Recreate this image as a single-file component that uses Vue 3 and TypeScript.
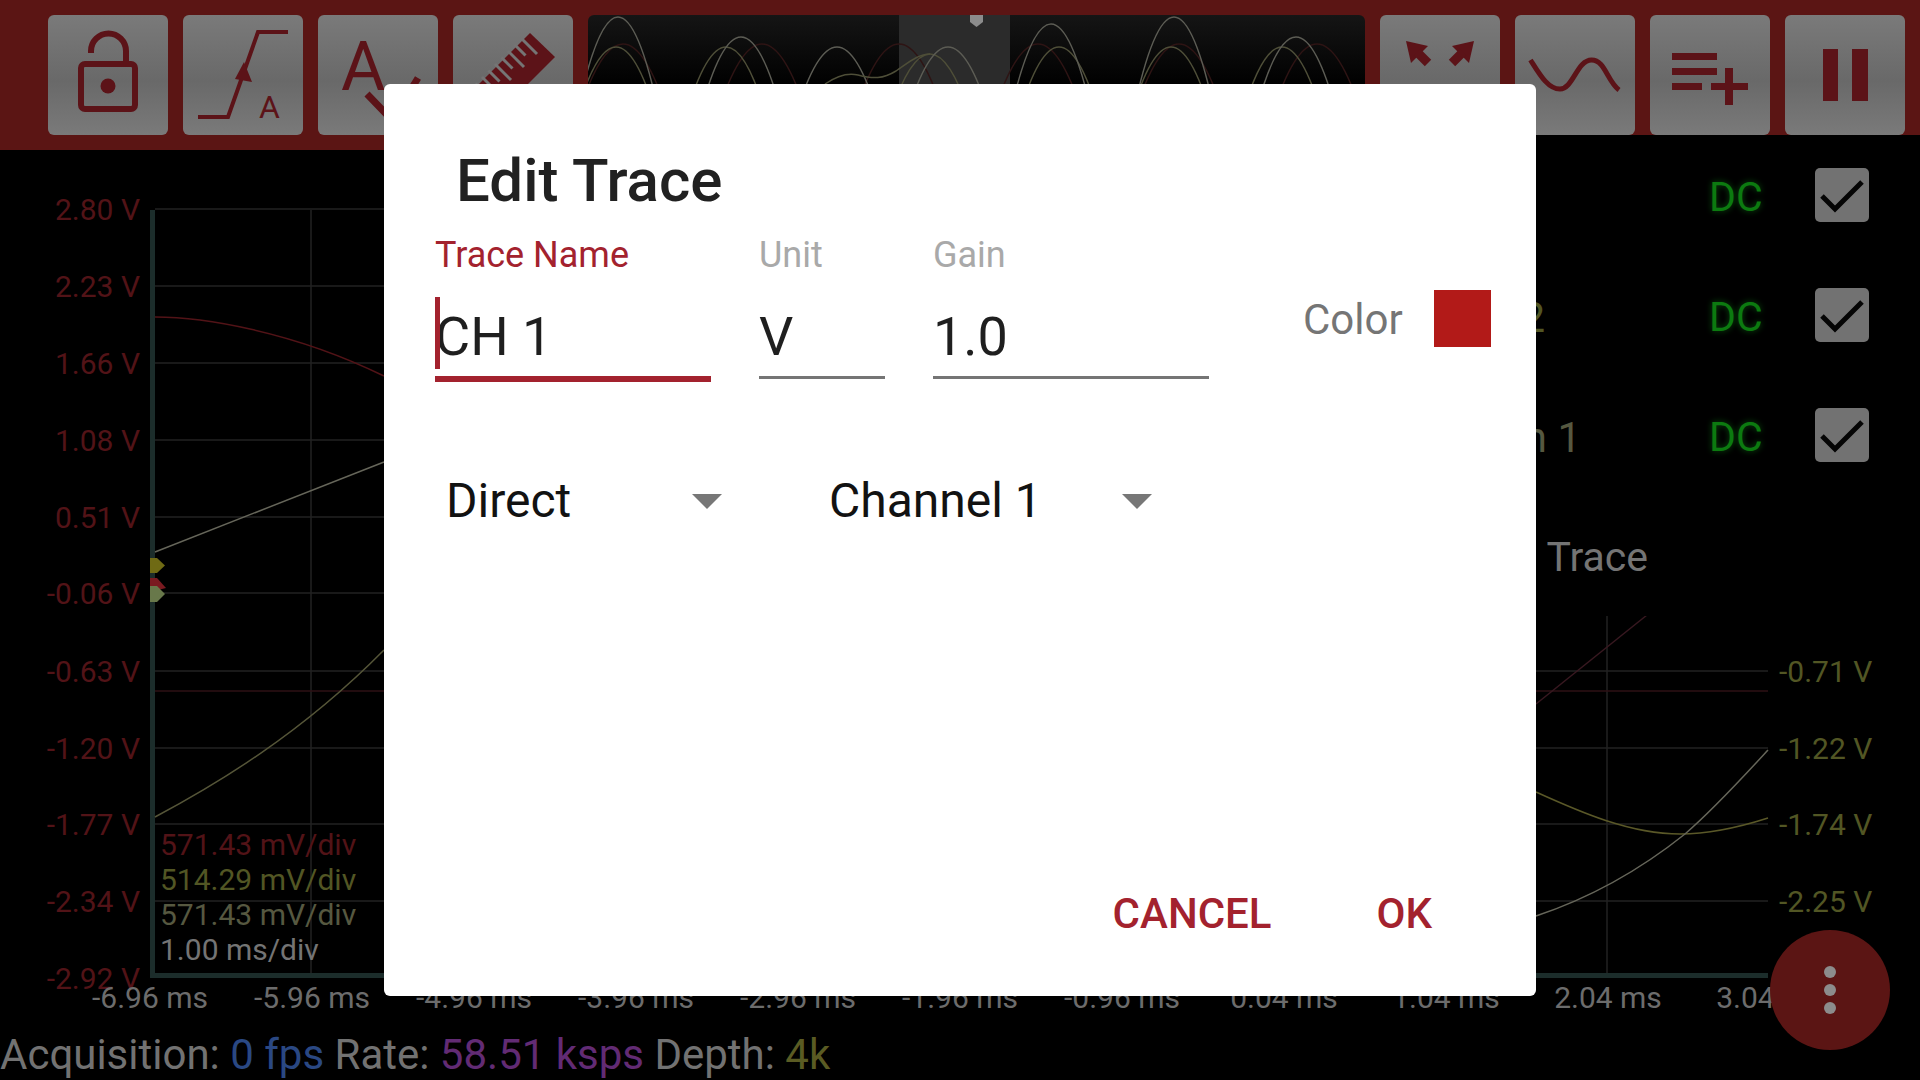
<template>
  <div class="screen">
    <header class="toolbar">
      <div class="tools tools-left">
        <button class="tool">
          <svg viewBox="0 0 120 120" class="ico">
            <rect x="33" y="49" width="54" height="45" rx="4" class="ln" stroke-width="6" />
            <circle cx="60" cy="71" r="7.5" class="fl" />
            <path d="M43 38V36a17.5 17.5 0 0 1 35 0V46" class="ln" stroke-width="6" />
          </svg>
        </button>
        <button class="tool">
          <svg viewBox="0 0 120 120" class="ico">
            <path d="M15 102H45L75 17H105" class="ln" stroke-width="4" />
            <path d="M61 47L52 64L69 67Z" class="fl" />
            <text x="76" y="103" class="ico-text" font-size="32">A</text>
          </svg>
        </button>
        <button class="tool">
          <svg viewBox="0 0 120 120" class="ico">
            <text x="23" y="75" class="ico-text" font-size="68">A</text>
            <path d="M49 79L74 105L100 63" class="ln" stroke-width="7" />
          </svg>
        </button>
        <button class="tool">
          <svg viewBox="0 0 120 120" class="ico">
            <path d="M77 18L102 42L37 107L12 83Z" class="fl" />
            <line
              v-for="t in rulerTicks"
              :key="t.x1"
              :x1="t.x1"
              :y1="t.y1"
              :x2="t.x2"
              :y2="t.y2"
              class="tick"
            />
          </svg>
        </button>
        <div class="overview">
          <svg viewBox="0 0 777 120" class="overview-svg">
            <rect x="311" y="0" width="111" height="120" fill="#2b2b2b" />
            <path v-for="b in bumpsRed" :key="b" :d="b" class="bump" stroke="#2e1414" />
            <path v-for="b in bumpsOlive" :key="b" :d="b" class="bump" stroke="#4e4e38" />
            <path v-for="b in bumpsGray" :key="b" :d="b" class="bump" stroke="#5c5c54" />
            <path d="M237 69C250 60 262 58 270 60C285 64 295 64 308 56C320 48 330 39 342 39" class="bump" stroke="#4e4e38" />
            <path d="M382 0H395V7L388.500 12L382 7Z" fill="#8c8c8c" />
          </svg>
        </div>
      </div>
      <div class="tools tools-right">
        <button class="tool">
          <svg viewBox="0 0 120 120" class="ico">
            <path d="M26 26L48 31L31 48Z" class="fl" />
            <path d="M37 37L48 48" class="ln" stroke-width="9" />
            <path d="M94 26L72 31L89 48Z" class="fl" />
            <path d="M83 37L72 48" class="ln" stroke-width="9" />
          </svg>
        </button>
        <button class="tool">
          <svg viewBox="0 0 120 120" class="ico">
            <path d="M15.500 45C25 60 33 74 45 74C58 74 62 45 76.600 45C90 45 92 66 104 75" class="ln" stroke-width="5" />
          </svg>
        </button>
        <button class="tool">
          <svg viewBox="0 0 120 120" class="ico">
            <path d="M22 38H67V45H22ZM22 53H67V60H22ZM22 68H52V75H22ZM61 68H75V53H83V68H98V75H83V90H75V75H61Z" class="fl" />
          </svg>
        </button>
        <button class="tool">
          <svg viewBox="0 0 120 120" class="ico">
            <path d="M38 34H53V86H38ZM67 34H83V86H67Z" class="fl" />
          </svg>
        </button>
      </div>
    </header>

    <main class="workspace">
      <svg class="chart" viewBox="0 150 1920 880" width="1920" height="880">
        <line v-for="y in gridY" :key="y" x1="155" x2="1768" :y1="y" :y2="y" class="grid" />
        <line v-for="x in gridX" :key="x" :x1="x" :x2="x" y1="210" y2="975" class="grid" />
        <line x1="155" x2="1768" y1="691" y2="691" stroke="#2e1014" stroke-width="1.500" />
        <path d="M152.500 210V975.500H1768" fill="none" stroke="#1c2d2b" stroke-width="5" />

        <path d="M155 317C200 317 290 330 384 376" class="trace" stroke="#521317" />
        <path d="M155 552L384 462" class="trace" stroke="#66665a" />
        <path d="M155 817C215 785 300 735 384 650" class="trace" stroke="#555538" />
        <path d="M1536 704L1647 615" class="trace" stroke="#381820" />
        <path d="M1536 792C1580 812 1630 834 1680 834C1710 834 1740 827 1768 818" class="trace" stroke="#5a5828" />
        <path d="M1536 916C1590 898 1640 870 1685 834C1715 808 1745 775 1768 750" class="trace" stroke="#66665a" />

        <path d="M150 558H157L165 565.500L157 573H150Z" fill="#6f6a14" />
        <path d="M150 578H157L166 588L150 592Z" fill="#7a1a20" />
        <path d="M150 586H157L165 594L157 602H150Z" fill="#68784a" />

        <text v-for="l in leftLabels" :key="l.text" x="140" :y="l.y + 10.500" text-anchor="end" class="lbl" fill="#521317">{{ l.text }}</text>
        <text v-for="l in rightLabels" :key="l.text" x="1779" :y="l.y + 10.500" class="lbl" fill="#525624">{{ l.text }}</text>
        <text v-for="t in timeLabels" :key="t.text" :x="t.x" y="1008" text-anchor="middle" class="lbl" fill="#6c6c6c">{{ t.text }}</text>
        <text v-for="s in scales" :key="s.y" x="160" :y="s.y" class="lbl" :fill="s.color">{{ s.text }}</text>
      </svg>

      <section class="trace-list">
        <div v-for="t in traces" :key="t.name" class="trace-row">
          <span class="trace-name" :style="{ color: t.color, marginRight: t.gap + 'px' }">{{ t.name }}</span>
          <span class="dc">DC</span>
          <span class="check">
            <svg viewBox="0 0 54 54" width="54" height="54">
              <path d="M7 28L20 41L47 14" fill="none" stroke="#050505" stroke-width="5" />
            </svg>
          </span>
        </div>
        <div class="trace-row">
          <span class="trace-name add-trace">Add Trace</span>
        </div>
      </section>
    </main>

    <footer class="status">
      Acquisition: <span class="fps">0 fps</span> Rate: <span class="rate">58.51 ksps</span> Depth: <span class="depth">4k</span>
    </footer>

    <button class="fab"><i></i><i></i><i></i></button>

    <div class="dialog">
      <h2 class="dialog-title">Edit Trace</h2>
      <div class="form-row">
        <div class="field field-name active">
          <div class="field-label">Trace Name</div>
          <div class="field-value">CH 1</div>
        </div>
        <div class="field field-unit">
          <div class="field-label">Unit</div>
          <div class="field-value">V</div>
        </div>
        <div class="field field-gain">
          <div class="field-label">Gain</div>
          <div class="field-value">1.0</div>
        </div>
        <div class="color-pick">
          <span class="color-label">Color</span>
          <span class="swatch"></span>
        </div>
      </div>
      <div class="select-row">
        <div class="select select-mode"><span>Direct</span><i class="caret"></i></div>
        <div class="select select-source"><span>Channel 1</span><i class="caret"></i></div>
      </div>
      <div class="actions">
        <button class="action">CANCEL</button>
        <button class="action">OK</button>
      </div>
    </div>
  </div>
</template>

<script setup lang="ts">
// parabola through (cx, top), opening down to the overview's base line
const arch = (cx: number, top: number, half: number) => {
  const x = cx - 588
  const t = top - 15
  return `M${x - half * 1.25} 100Q${x} ${2 * t - 100} ${x + half * 1.25} 100`
}

const bumpsGray = [[618, 17], [741, 37], [837, 47], [948, 47], [1051, 24], [1174, 17], [1296, 37]].map(([c, t]) => arch(c, t, 33))
const bumpsOlive = [[616, 47], [726, 47], [930, 54], [1059, 47], [1171, 47], [1282, 47]].map(([c, t]) => arch(c, t, 32))
const bumpsRed = [[623, 44], [762, 44], [899, 44], [1038, 44], [1179, 44], [1317, 44]].map(([c, t]) => arch(c, t, 36))

const rulerTicks = Array.from({ length: 9 }, (_, i) => {
  const x = 70 - i * 6.500
  const y = 25 + i * 6.500
  const len = i % 2 ? 9 : 14
  return { x1: x - 2, y1: y - 2, x2: x + len, y2: y + len }
})

const gridY = [209, 286, 363, 440, 517, 593, 671, 748, 824, 901]
const gridX = [311, 473, 635, 797, 959, 1121, 1283, 1445, 1607]

const leftValues = ['2.80', '2.23', '1.66', '1.08', '0.51', '-0.06', '-0.63', '-1.20', '-1.77', '-2.34', '-2.92']
const leftY = [...gridY, 978]
const leftLabels = leftValues.map((v, i) => ({ text: `${v} V`, y: leftY[i] }))

const rightLabels = [
  { text: '-0.71 V', y: 671 },
  { text: '-1.22 V', y: 748 },
  { text: '-1.74 V', y: 824 },
  { text: '-2.25 V', y: 901 },
]

const timeValues = ['-6.96', '-5.96', '-4.96', '-3.96', '-2.96', '-1.96', '-0.96', '0.04', '1.04', '2.04', '3.04']
const timeLabels = timeValues.map((v, i) => ({ text: `${v} ms`, x: 150 + i * 162 }))

const scales = [
  { text: '571.43 mV/div', y: 855, color: '#521317' },
  { text: '514.29 mV/div', y: 890, color: '#525624' },
  { text: '571.43 mV/div', y: 925, color: '#565840' },
  { text: '1.00 ms/div', y: 960, color: '#747474' },
]

const traces = [
  { name: 'CH 1', color: '#521317', gap: 220 },
  { name: 'Trace 2', color: '#525624', gap: 164 },
  { name: 'Function 1', color: '#565840', gap: 128 },
]
</script>

<style scoped>
.screen {
  position: relative;
  width: 1920px;
  height: 1080px;
  overflow: hidden;
  background: #000;
  display: flex;
  flex-direction: column;
  font-family: Roboto, "Liberation Sans", sans-serif;
}

.toolbar {
  display: flex;
  align-items: flex-start;
  height: 150px;
  flex: none;
}

.tools {
  display: flex;
  gap: 15px;
  padding-top: 15px;
  background: #5b1514;
  box-sizing: border-box;
}

.tools-left {
  height: 150px;
  padding-left: 48px;
  padding-right: 15px;
}

.tools-right {
  height: 135px;
  padding-right: 15px;
  flex: 1;
}

.tool {
  width: 120px;
  height: 120px;
  flex: none;
  padding: 0;
  border: 0;
  border-radius: 6px;
  background: linear-gradient(#7a7a7a, #696969 55%, #7a7a7a);
}

.ico {
  display: block;
  width: 120px;
  height: 120px;
}

.ln {
  fill: none;
  stroke: #5c1318;
}

.fl {
  fill: #5c1318;
}

.ico-text {
  fill: #5c1318;
  font-family: Roboto, sans-serif;
}

.tick {
  stroke: #757575;
  stroke-width: 3;
}

.overview {
  width: 777px;
  height: 120px;
  flex: none;
  border-radius: 6px;
  overflow: hidden;
  background: linear-gradient(#151515, #000 60%);
}

.overview-svg {
  display: block;
  width: 777px;
  height: 120px;
}

.bump {
  fill: none;
  stroke-width: 1.500;
}

.workspace {
  position: relative;
  flex: 1;
}

.chart {
  display: block;
}

.grid {
  stroke: #222;
  stroke-width: 1.500;
}

.trace {
  fill: none;
  stroke-width: 1.500;
}

.lbl {
  font-size: 30px;
}

.trace-list {
  position: absolute;
  top: 0;
  right: 0;
  width: 580px;
  height: 466px;
  background: #000;
  padding-right: 51px;
  box-sizing: border-box;
  display: flex;
  flex-direction: column;
  gap: 26px;
}

.trace-row {
  display: flex;
  align-items: center;
  height: 94px;
  flex: none;
}

.trace-name {
  flex: 1;
  text-align: right;
  font-size: 42px;
  white-space: nowrap;
}

.add-trace {
  color: #747474;
  font-size: 41px;
  margin-right: 221px;
}

.dc {
  width: 54px;
  margin-right: 52px;
  font-size: 41px;
  color: #0c7a10;
  text-shadow: 0 0 6px rgba(20, 160, 30, 0.5);
  white-space: nowrap;
}

.check {
  width: 54px;
  height: 54px;
  margin-top: -5px;
  border-radius: 5px;
  background: #727272;
}

.check svg {
  display: block;
}

.status {
  height: 50px;
  flex: none;
  font-size: 42px;
  line-height: 50px;
  color: #727272;
  white-space: nowrap;
}

.fps {
  color: #2a4883;
}

.rate {
  color: #622b74;
}

.depth {
  color: #5a5b23;
}

.fab {
  position: absolute;
  left: 1770px;
  top: 930px;
  width: 120px;
  height: 120px;
  padding: 0;
  border: 0;
  border-radius: 50%;
  background: #5b1514;
  display: flex;
  flex-direction: column;
  align-items: center;
  justify-content: center;
  gap: 6px;
}

.fab i {
  width: 12px;
  height: 12px;
  border-radius: 50%;
  background: #8c8c8c;
}

.dialog {
  position: absolute;
  left: 384px;
  top: 84px;
  width: 1152px;
  height: 912px;
  box-sizing: border-box;
  background: #fff;
  border-radius: 6px;
  padding-top: 62px;
  display: flex;
  flex-direction: column;
}

.dialog-title {
  margin: 0;
  padding-left: 72px;
  font-size: 60px;
  line-height: 70px;
  font-weight: 500;
  color: #212121;
}

.form-row {
  display: flex;
  align-items: flex-start;
  gap: 48px;
  margin-top: 17px;
  padding-left: 51px;
}

.field-name {
  width: 276px;
}

.field-unit {
  width: 126px;
}

.field-gain {
  width: 276px;
}

.field-label {
  font-size: 36px;
  line-height: 44px;
  color: #a9a9a9;
}

.field-value {
  position: relative;
  margin-top: 28px;
  padding-bottom: 7px;
  border-bottom: 3px solid #757575;
  font-size: 54px;
  line-height: 64px;
  color: #1f1f1f;
}

.active .field-label {
  color: #a3222e;
}

.active .field-value {
  border-bottom: 6px solid #a3222e;
}

.active .field-value::before {
  content: "";
  position: absolute;
  left: 0;
  top: -8px;
  width: 5px;
  height: 72px;
  background: #a3222e;
}

.color-pick {
  display: flex;
  align-items: center;
  gap: 31px;
  margin-top: 56px;
  margin-left: 46px;
}

.color-label {
  margin-top: 2px;
  font-size: 42px;
  line-height: 57px;
  color: #757575;
}

.swatch {
  width: 57px;
  height: 57px;
  background: #b21a18;
}

.select-row {
  display: flex;
  gap: 78px;
  margin-top: 91px;
  padding-left: 51px;
}

.select {
  display: flex;
  align-items: center;
  justify-content: space-between;
  box-sizing: border-box;
  padding: 0 18px 0 11px;
  font-size: 48px;
  line-height: 56px;
  color: #121212;
}

.select-mode {
  width: 305px;
}

.select-source {
  width: 352px;
}

.caret {
  width: 0;
  height: 0;
  border-left: 15px solid transparent;
  border-right: 15px solid transparent;
  border-top: 15px solid #777;
}

.actions {
  display: flex;
  justify-content: flex-end;
  gap: 105px;
  margin-top: auto;
  padding: 0 104px 57px 0;
}

.action {
  padding: 0;
  border: 0;
  background: none;
  font-family: inherit;
  font-size: 42px;
  line-height: 50px;
  font-weight: 500;
  color: #a3222e;
}
</style>

<style>
html,
body {
  margin: 0;
  background: #000;
}
</style>
